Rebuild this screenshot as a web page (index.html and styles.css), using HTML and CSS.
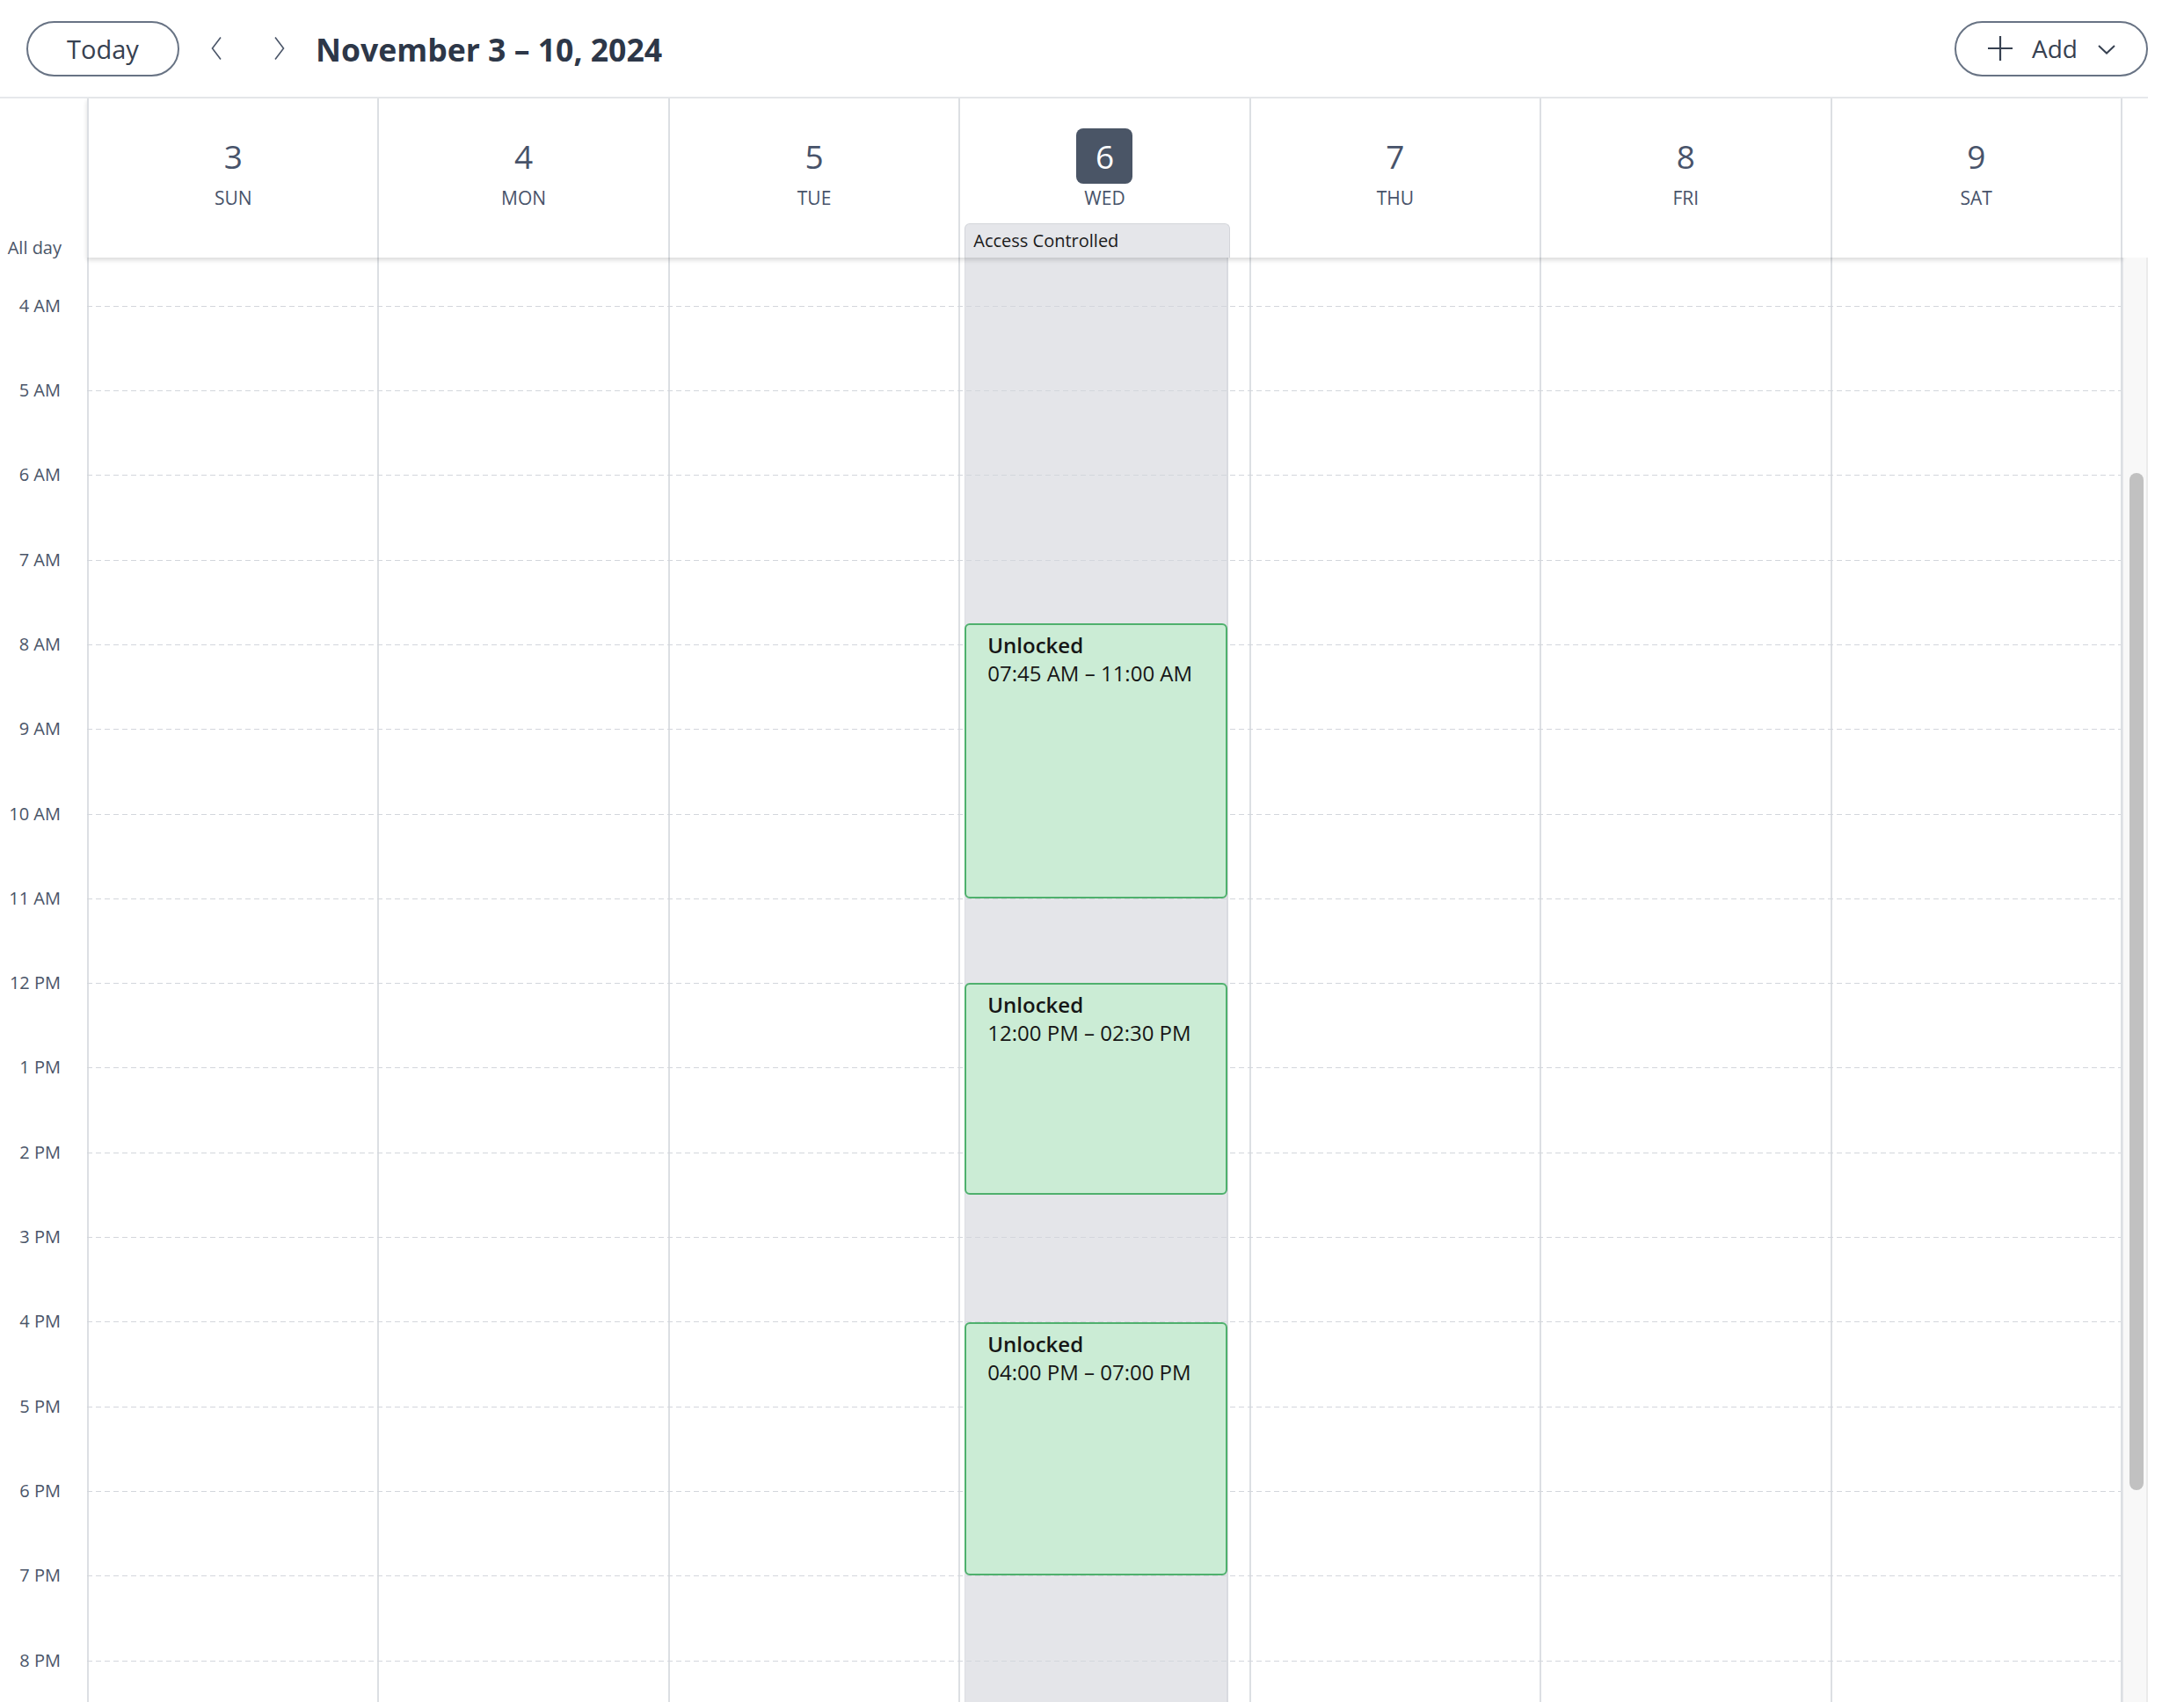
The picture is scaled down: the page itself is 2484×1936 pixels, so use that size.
FILE: index.html
```html
<!DOCTYPE html>
<html lang="en">
<head>
<meta charset="utf-8">
<title>Week calendar</title>
<link rel="stylesheet" href="styles.css">
</head>
<body>
<div class="app">
  <header class="toolbar">
    <button class="pill today-btn">Today</button>
    <button class="nav-btn" aria-label="Previous week">
      <svg width="12" height="28" viewBox="0 0 12 28"><path d="M11 1.5 L1.5 14 L11 26.5" fill="none" stroke="#4a5568" stroke-width="1.6"/></svg>
    </button>
    <button class="nav-btn" aria-label="Next week">
      <svg width="12" height="28" viewBox="0 0 12 28"><path d="M1 1.5 L10.5 14 L1 26.5" fill="none" stroke="#4a5568" stroke-width="1.6"/></svg>
    </button>
    <h1 class="title">November 3 – 10, 2024</h1>
    <div class="spacer"></div>
    <button class="pill add-btn">
      <svg class="plus" width="28" height="28" viewBox="0 0 28 28"><path d="M14 0 V28 M0 14 H28" stroke="#374151" stroke-width="2.2" fill="none"/></svg>
      <span>Add</span>
      <svg class="chev" width="20" height="11" viewBox="0 0 20 11"><path d="M1 1 L10 9.5 L19 1" stroke="#374151" stroke-width="2" fill="none"/></svg>
    </button>
  </header>

  <div class="week-head">
    <div class="gutter-head"><span>All day</span></div>
    <div class="days-head">
      <div class="day-head"><div class="num">3</div><div class="dow">SUN</div></div>
      <div class="day-head"><div class="num">4</div><div class="dow">MON</div></div>
      <div class="day-head"><div class="num">5</div><div class="dow">TUE</div></div>
      <div class="day-head"><div class="num badge">6</div><div class="dow">WED</div><div class="allday-chip">Access Controlled</div></div>
      <div class="day-head"><div class="num">7</div><div class="dow">THU</div></div>
      <div class="day-head"><div class="num">8</div><div class="dow">FRI</div></div>
      <div class="day-head"><div class="num">9</div><div class="dow">SAT</div></div>
    </div>
    <div class="head-filler"></div>
  </div>

  <div class="week-body">
    <div class="scroller">
      <div class="content">
        <div class="gutter">
          <div class="hour-label"></div>
          <div class="hour-label"><span>4 AM</span></div>
          <div class="hour-label"><span>5 AM</span></div>
          <div class="hour-label"><span>6 AM</span></div>
          <div class="hour-label"><span>7 AM</span></div>
          <div class="hour-label"><span>8 AM</span></div>
          <div class="hour-label"><span>9 AM</span></div>
          <div class="hour-label"><span>10 AM</span></div>
          <div class="hour-label"><span>11 AM</span></div>
          <div class="hour-label"><span>12 PM</span></div>
          <div class="hour-label"><span>1 PM</span></div>
          <div class="hour-label"><span>2 PM</span></div>
          <div class="hour-label"><span>3 PM</span></div>
          <div class="hour-label"><span>4 PM</span></div>
          <div class="hour-label"><span>5 PM</span></div>
          <div class="hour-label"><span>6 PM</span></div>
          <div class="hour-label"><span>7 PM</span></div>
          <div class="hour-label"><span>8 PM</span></div>
        </div>
        <div class="days">
          <div class="hour-lines">
            <div class="hline"></div><div class="hline"></div><div class="hline"></div>
            <div class="hline"></div><div class="hline"></div><div class="hline"></div>
            <div class="hline"></div><div class="hline"></div><div class="hline"></div>
            <div class="hline"></div><div class="hline"></div><div class="hline"></div>
            <div class="hline"></div><div class="hline"></div><div class="hline"></div>
            <div class="hline"></div><div class="hline"></div><div class="hline"></div>
          </div>
          <div class="day-col"></div>
          <div class="day-col"></div>
          <div class="day-col"></div>
          <div class="day-col">
            <div class="ac-band"></div>
            <div class="event" style="top:457.4px;height:313px;">
              <div class="ev-title">Unlocked</div>
              <div class="ev-time">07:45 AM – 11:00 AM</div>
            </div>
            <div class="event" style="top:866.7px;height:240.75px;">
              <div class="ev-title">Unlocked</div>
              <div class="ev-time">12:00 PM – 02:30 PM</div>
            </div>
            <div class="event" style="top:1252px;height:288.9px;">
              <div class="ev-title">Unlocked</div>
              <div class="ev-time">04:00 PM – 07:00 PM</div>
            </div>
          </div>
          <div class="day-col"></div>
          <div class="day-col"></div>
          <div class="day-col"></div>
        </div>
      </div>
    </div>
    <div class="scrollbar"><div class="thumb"></div></div>
  </div>
</div>
</body>
</html>
```

FILE: styles.css
```css
* { box-sizing: border-box; }

html, body {
  margin: 0;
  padding: 0;
  background: #ffffff;
}

body {
  font-family: "Open Sans", "Noto Sans", "Liberation Sans", sans-serif;
  color: #4a5568;
  overflow: hidden;
  height: 1936px;
}

.app {
  width: 2443px;
  height: 1936px;
  display: flex;
  flex-direction: column;
}

/* ---------- toolbar ---------- */
.toolbar {
  height: 112px;
  flex: 0 0 112px;
  display: flex;
  align-items: center;
  padding-left: 30px;
  border-bottom: 2px solid #e6e8eb;
}

.pill {
  font-family: inherit;
  background: #fff;
  border: 2px solid #687384;
  border-radius: 32px;
  height: 63px;
  color: #374151;
  cursor: pointer;
  padding: 0;
}

.today-btn {
  width: 174px;
  font-size: 29px;
  font-weight: 500;
  line-height: 59px;
}

.nav-btn {
  background: none;
  border: 0;
  padding: 0;
  width: 45px;
  height: 45px;
  display: flex;
  align-items: center;
  justify-content: center;
  margin-left: 19px;
  cursor: pointer;
}
.nav-btn + .nav-btn { margin-left: 27px; }

.title {
  margin: 2px 0 0 19px;
  font-size: 35.6px;
  font-weight: 700;
  color: #2d3748;
  line-height: 50px;
}

.spacer { flex: 1; }

.add-btn {
  width: 220px;
  display: flex;
  align-items: center;
  padding-left: 36px;
  font-size: 28px;
  font-weight: 500;
}
.add-btn .plus { flex: 0 0 28px; }
.add-btn span { margin-left: 22px; line-height: 59px; }
.add-btn .chev { margin-left: 23px; margin-top: 2px; }

/* ---------- week header ---------- */
.week-head {
  height: 181px;
  flex: 0 0 181px;
  display: flex;
  position: relative;
  z-index: 5;
}

.gutter-head {
  width: 99px;
  flex: 0 0 99px;
  display: flex;
  align-items: flex-end;
  justify-content: flex-end;
  padding-right: 29px;
  padding-bottom: 1px;
  font-size: 20px;
  line-height: 20px;
  color: #4a5568;
}

.days-head {
  width: 2315px;
  flex: 0 0 2315px;
  display: flex;
  border-right: 2px solid #dcdfe3;
  background: #fff;
  box-shadow: 0 3px 5px rgba(0, 0, 0, 0.14);
}

.day-head {
  flex: 1 1 0;
  border-left: 2px solid #dcdfe3;
  display: flex;
  flex-direction: column;
  align-items: center;
  padding-top: 34px;
}

.num {
  height: 63px;
  line-height: 63px;
  font-size: 37px;
  font-weight: 400;
  color: #48536a;
}

.badge {
  width: 64px;
  text-align: center;
  background: #4a5566;
  color: #ffffff;
  border-radius: 8px;
}

.dow {
  margin-top: 2px;
  font-size: 21px;
  line-height: 28px;
  font-weight: 500;
  color: #48536a;
}

.allday-chip {
  margin-top: auto;
  align-self: stretch;
  margin-left: 5px;
  margin-right: 22px;
  height: 39px;
  border: 1px solid #d3d5da;
  border-bottom: 0;
  border-radius: 6px 6px 0 0;
  background: #e5e6ea;
  font-size: 20px;
  font-weight: 500;
  line-height: 37px;
  padding-left: 9px;
  color: #1a1a1a;
}

.head-filler {
  flex: 1;
  background: #fff;
}

/* ---------- week body ---------- */
.week-body {
  flex: 1 1 auto;
  display: flex;
  overflow: hidden;
}

.scroller {
  width: 2414px;
  flex: 0 0 2414px;
  overflow: hidden;
  position: relative;
}

.content {
  display: flex;
  margin-top: -41.5px;
}

.gutter {
  width: 99px;
  flex: 0 0 99px;
}

.hour-label {
  height: 96.3px;
  text-align: right;
  padding-right: 30px;
  font-size: 20px;
  color: #4a5568;
}
.hour-label span {
  display: block;
  line-height: 24px;
  transform: translateY(-50%);
}

.days {
  width: 2315px;
  flex: 0 0 2315px;
  display: flex;
  position: relative;
  border-right: 2px solid #dcdfe3;
  height: 1733.4px;
}

.hour-lines {
  position: absolute;
  top: 0;
  left: 0;
  right: 0;
  bottom: 0;
  z-index: 1;
  pointer-events: none;
  display: flex;
  flex-direction: column;
}

.hline {
  height: 96.3px;
  flex: 0 0 96.3px;
  background-image: repeating-linear-gradient(to right, #d3d6dc 0 6px, transparent 6px 10px);
  background-size: 100% 2px;
  background-repeat: no-repeat;
  background-position: 0 -1px;
}

.day-col {
  flex: 1 1 0;
  border-left: 2px solid #dcdfe3;
  position: relative;
}

.ac-band {
  margin-left: 5px;
  width: 300px;
  height: 100%;
  background: #e4e5e9;
  border-left: 1px solid #dcdde2;
  border-right: 2px solid #d9dbe0;
}

.event {
  position: absolute;
  left: 5px;
  width: 299px;
  z-index: 2;
  border: 2px solid #4fb06d;
  border-radius: 6px;
  background: #cbecd5;
  padding: 7px 24px;
  color: #161616;
}

.ev-title {
  font-size: 24px;
  line-height: 32px;
  font-weight: 600;
}

.ev-time {
  font-size: 24px;
  line-height: 32px;
  font-weight: 400;
}

/* ---------- fake scrollbar ---------- */
.scrollbar {
  flex: 1;
  background: #f8f8f8;
  border-left: 1px solid #e6e7ea;
  border-right: 2px solid #ebebeb;
  padding-left: 7px;
}

.thumb {
  width: 16px;
  height: 1157px;
  margin-top: 245px;
  border-radius: 8px;
  background: #c1c1c1;
}
```
